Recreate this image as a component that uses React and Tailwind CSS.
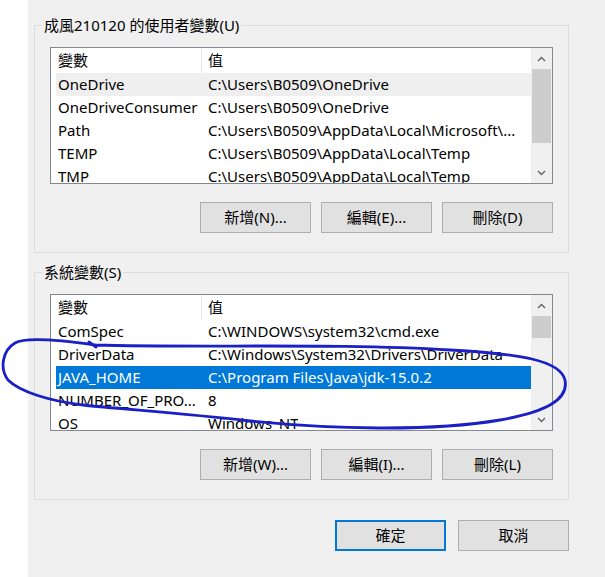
import React from 'react';

const userVars = [
  { name: 'OneDrive', value: 'C:\\Users\\B0509\\OneDrive', hover: true },
  { name: 'OneDriveConsumer', value: 'C:\\Users\\B0509\\OneDrive' },
  { name: 'Path', value: 'C:\\Users\\B0509\\AppData\\Local\\Microsoft\\...' },
  { name: 'TEMP', value: 'C:\\Users\\B0509\\AppData\\Local\\Temp' },
  { name: 'TMP', value: 'C:\\Users\\B0509\\AppData\\Local\\Temp' },
];

const systemVars = [
  { name: 'ComSpec', value: 'C:\\WINDOWS\\system32\\cmd.exe' },
  { name: 'DriverData', value: 'C:\\Windows\\System32\\Drivers\\DriverData' },
  { name: 'JAVA_HOME', value: 'C:\\Program Files\\Java\\jdk-15.0.2', selected: true },
  { name: 'NUMBER_OF_PRO...', value: '8' },
  { name: 'OS', value: 'Windows_NT' },
];

const Chevron = ({ down }) => (
  <svg width="9" height="6" viewBox="0 0 9 6" className="text-[#606060]">
    <polyline
      points={down ? '1,1 4.5,4.5 8,1' : '1,5 4.5,1.5 8,5'}
      fill="none"
      stroke="currentColor"
      strokeWidth="1.3"
    />
  </svg>
);

const ListView = ({ rows, thumbHeight }) => (
  <div className="h-[137px] border border-[#828790] bg-white flex overflow-hidden">
    <div className="flex-1 min-w-0 flex flex-col">
      <div className="h-[25px] shrink-0 flex items-center">
        <div className="w-[151px] h-full pl-[7px] border-r border-[#e5e5e5] flex items-center">變數</div>
        <div className="pl-[6px]">值</div>
      </div>
      {rows.map((r) => (
        <div key={r.name} className="pl-[5px] shrink-0">
          <div
            className={
              'h-[23px] flex items-center whitespace-nowrap ' +
              (r.selected ? 'bg-[#0078d7] text-white' : r.hover ? 'bg-[#efefef]' : '')
            }
          >
            <div className="w-[150px] pl-[2px] overflow-hidden">{r.name}</div>
            <div className="pl-[2px] overflow-hidden">{r.value}</div>
          </div>
        </div>
      ))}
    </div>
    <div className="w-[21px] shrink-0 bg-[#f0f0f0] flex flex-col items-center">
      <div className="h-[21px] flex items-center justify-center">
        <Chevron />
      </div>
      <div className="flex-1 w-full px-[1px]">
        <div className="w-full bg-[#cdcdcd]" style={{ height: thumbHeight }} />
      </div>
      <div className="h-[21px] flex items-center justify-center">
        <Chevron down />
      </div>
    </div>
  </div>
);

const Button = ({ children, primary }) => (
  <button
    className={
      'w-[111px] h-[31px] bg-[#e1e1e1] flex items-center justify-center ' +
      (primary ? 'border-2 border-[#0078d7]' : 'border border-[#adadad]')
    }
  >
    {children}
  </button>
);

const Group = ({ title, children }) => (
  <fieldset className="w-[535px] border border-[#dcdcdc] p-0 m-0">
    <legend className="ml-[7px] px-[2px] leading-[20px]">{title}</legend>
    <div className="pt-[12px] px-[15px] pb-[19px]">{children}</div>
  </fieldset>
);

export default function App() {
  return (
    <div
      className="relative w-[605px] h-[577px] bg-white flex text-[15px] text-black overflow-hidden"
      style={{ fontFamily: '"Noto Sans", "Noto Sans CJK TC", sans-serif' }}
    >
      <div className="w-[28px] shrink-0 bg-white" />
      <div className="flex-1 bg-[#f0f0f0] pl-[6px] pt-[15px]">
        <Group title="成風210120 的使用者變數(U)">
          <ListView rows={userVars} thumbHeight={74} />
          <div className="mt-[18px] flex justify-end gap-[10px]">
            <Button>新增(N)...</Button>
            <Button>編輯(E)...</Button>
            <Button>刪除(D)</Button>
          </div>
        </Group>
        <div className="mt-[9px]">
          <Group title="系統變數(S)">
            <ListView rows={systemVars} thumbHeight={22} />
            <div className="mt-[18px] flex justify-end gap-[10px]">
              <Button>新增(W)...</Button>
              <Button>編輯(I)...</Button>
              <Button>刪除(L)</Button>
            </div>
          </Group>
        </div>
        <div className="mt-[20px] w-[535px] flex justify-end gap-[12px]">
          <Button primary>確定</Button>
          <Button>取消</Button>
        </div>
      </div>
      {/* hand-drawn annotation */}
      <svg
        className="absolute inset-0 pointer-events-none"
        width="605"
        height="577"
        viewBox="0 0 605 577"
      >
        <path
          d="M 95 345 C 200 348, 340 343, 450 350 C 520 354, 560 360, 565 380 C 569 400, 545 412, 500 420 C 430 432, 330 429, 250 421 C 180 413, 120 409, 83 405 C 50 401, 20 392, 8 380 C -1 368, 3 350, 15 343 C 25 337, 60 340, 95 345 M 89 342 L 96 347"
          fill="none"
          stroke="#1b1fc6"
          strokeWidth="2.8"
          strokeLinecap="round"
          strokeLinejoin="round"
        />
      </svg>
    </div>
  );
}
